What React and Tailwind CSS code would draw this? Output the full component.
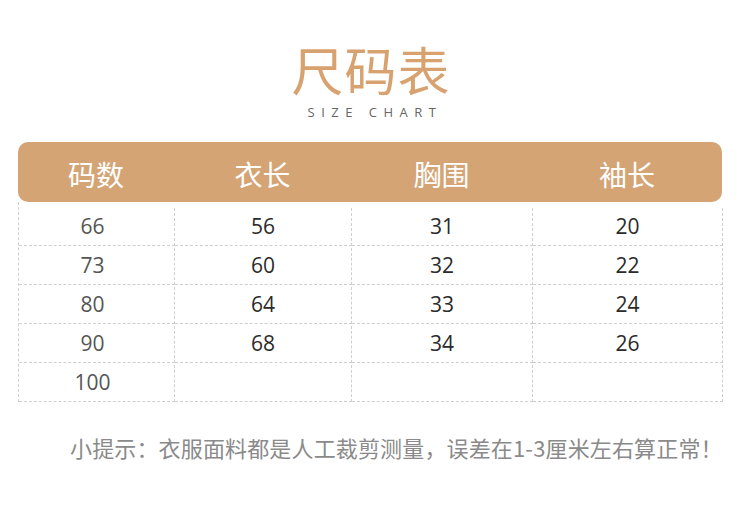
import React from 'react';

const cols = ['码数', '衣长', '胸围', '袖长'];
const rows = [
  ['66', '56', '31', '20'],
  ['73', '60', '32', '22'],
  ['80', '64', '33', '24'],
  ['90', '68', '34', '26'],
  ['100', '', '', ''],
];

const cjk = { fontFamily: '"Noto Sans CJK SC", sans-serif' };
const num = { fontFamily: '"Open Sans", "Noto Sans CJK SC", sans-serif' };

export default function App() {
  return (
    <div className="w-[750px] h-[507px] bg-white overflow-hidden" style={cjk}>
      {/* Title */}
      <div className="flex flex-col items-center pt-[38px]">
        <h1 className="text-[52px] leading-[62px] text-[#d7a26f] tracking-[1px] pr-[8px]">尺码表</h1>
        <p className="mt-[5px] text-[13px] leading-[14px] tracking-[0.5em] text-[#666]" style={num}>
          SIZE CHART
        </p>
      </div>

      {/* Table */}
      <div className="mx-[18px] mt-[23px] w-[704px]">
        <div className="grid grid-cols-[156px_177px_181px_190px] h-[60px] pt-[3px] bg-[#d4a475] rounded-[10px] text-white text-[28px]">
          {cols.map((c) => (
            <div key={c} className="flex items-center justify-center">{c}</div>
          ))}
        </div>
        <div className="border-l border-dashed border-[#cfcfcf]" style={num}>
          {rows.map((r, i) => (
            <div
              key={i}
              className={`grid grid-cols-[156px_177px_181px_190px] ${i === 0 ? 'h-[44px] pt-[6px]' : 'h-[39px] pt-[2px]'}`}
            >
              {r.map((v, j) => (
                <div
                  key={j}
                  className={`flex items-center justify-center border-r border-b border-dashed border-[#cfcfcf] text-[21px] ${j === 0 ? 'text-[#555] pr-[8px]' : 'text-[#2b2b2b]'}`}
                >
                  {v}
                </div>
              ))}
            </div>
          ))}
        </div>
      </div>

      {/* Footer note */}
      <p className="mt-[30px] pl-[70px] text-[22px] leading-[30px] text-[#8a8a8a] tracking-[0.15px]">
        小提示：衣服面料都是人工裁剪测量，误差在1-3厘米左右算正常！
      </p>
    </div>
  );
}
